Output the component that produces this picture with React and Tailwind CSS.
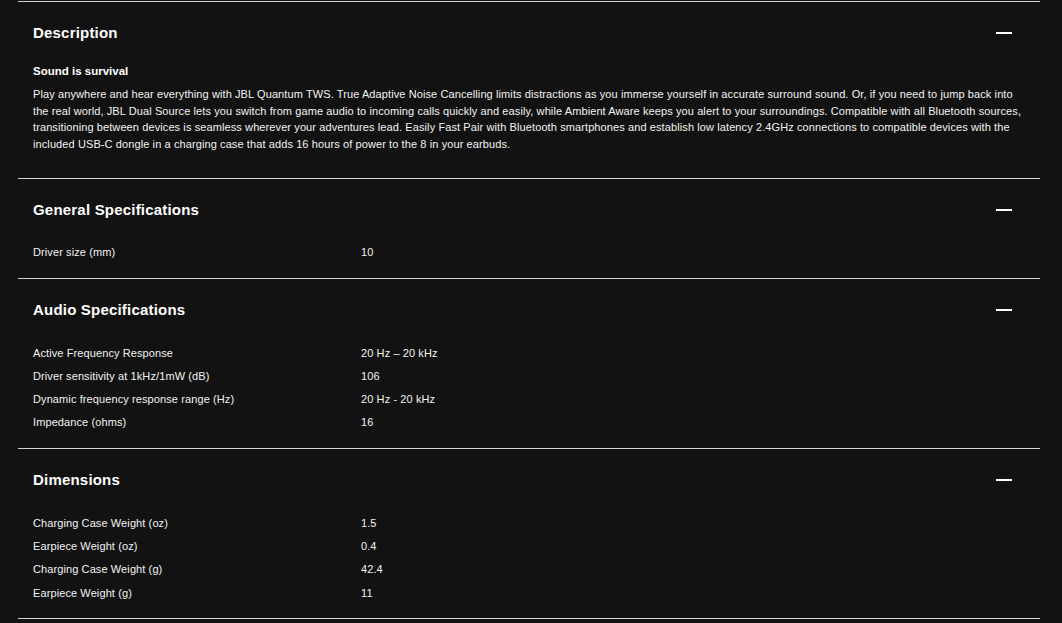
import React from "react";

const SECTIONS = [
  {
    title: "General Specifications",
    rows: [["Driver size (mm)", "10"]],
  },
  {
    title: "Audio Specifications",
    rows: [
      ["Active Frequency Response", "20 Hz – 20 kHz"],
      ["Driver sensitivity at 1kHz/1mW (dB)", "106"],
      ["Dynamic frequency response range (Hz)", "20 Hz - 20 kHz"],
      ["Impedance (ohms)", "16"],
    ],
  },
  {
    title: "Dimensions",
    rows: [
      ["Charging Case Weight (oz)", "1.5"],
      ["Earpiece Weight (oz)", "0.4"],
      ["Charging Case Weight (g)", "42.4"],
      ["Earpiece Weight (g)", "11"],
    ],
  },
];

function Header({ title }) {
  return (
    <div className="flex items-center justify-between pt-[21px]">
      <h2 className="text-[15px] leading-[20px] font-bold tracking-[0.2px] text-white">{title}</h2>
      {/* collapse icon */}
      <span className="mr-[13px] block h-[2px] w-[16px] bg-white" />
    </div>
  );
}

export default function App() {
  return (
    <div
      className="min-h-screen bg-[#121212] pl-[18px] pr-[22px] pt-px text-white"
      style={{ fontFamily: '"Liberation Sans", Arial, sans-serif' }}
    >
      {/* Description */}
      <section className="border-t border-[#d4d4d4] px-[15px] pb-[25px]">
        <Header title="Description" />
        <h3 className="mt-[20px] text-[11.5px] leading-[17px] font-bold">Sound is survival</h3>
        <p className="mt-[6px] text-[11px] leading-[16.7px] tracking-[0.1px] text-[#f2f2f2]">
          Play anywhere and hear everything with JBL Quantum TWS. True Adaptive Noise Cancelling
          limits distractions as you immerse yourself in accurate surround sound. Or, if you need to
          jump back into the real world, JBL Dual Source lets you switch from game audio to incoming
          calls quickly and easily, while Ambient Aware keeps you alert to your surroundings.
          Compatible with all Bluetooth sources, transitioning between devices is seamless wherever
          your adventures lead. Easily Fast Pair with Bluetooth smartphones and establish low latency
          2.4GHz connections to compatible devices with the included USB-C dongle in a charging case
          that adds 16 hours of power to the 8 in your earbuds.
        </p>
      </section>

      {SECTIONS.map((s) => (
        <section key={s.title} className="border-t border-[#d4d4d4] px-[15px] pb-[14px]">
          <Header title={s.title} />
          <div className="mt-[21px]">
            {s.rows.map(([label, value]) => (
              <div
                key={label}
                className="flex h-[23.3px] items-center text-[11px] tracking-[0.1px] text-[#f2f2f2]"
              >
                <span className="w-[328px] shrink-0">{label}</span>
                <span>{value}</span>
              </div>
            ))}
          </div>
        </section>
      ))}
      <div className="border-t border-[#d4d4d4]" />
    </div>
  );
}
